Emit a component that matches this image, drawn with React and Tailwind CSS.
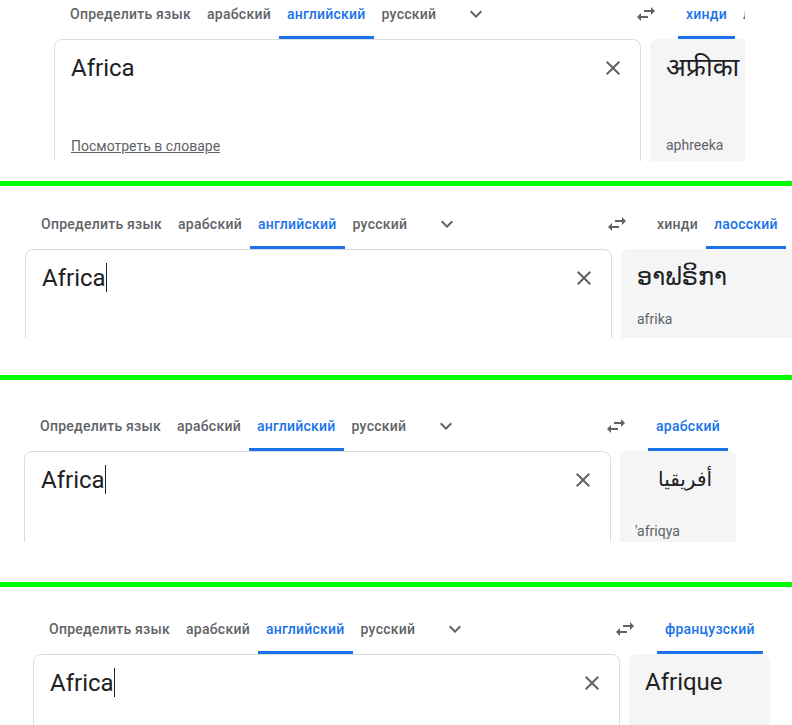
import React from 'react';

const font = { fontFamily: 'Roboto, "Noto Sans", "DejaVu Sans", sans-serif' };

const ChevronIcon = () => (
  <svg viewBox="0 0 24 24" className="w-6 h-6 fill-[#5f6368]">
    <path d="M16.59 8.59L12 13.17 7.41 8.59 6 10l6 6 6-6z" />
  </svg>
);

const SwapIcon = () => (
  <svg viewBox="0 0 24 24" className="w-6 h-6 fill-[#5f6368]">
    <path d="M6.99 11L3 15l3.99 4v-3H14v-2H6.99v-3zM21 9l-3.99-4v3H10v2h7.01v3L21 9z" />
  </svg>
);

const CloseIcon = () => (
  <svg viewBox="0 0 24 24" className="w-6 h-6 fill-[#5f6368]">
    <path d="M19 6.41L17.59 5 12 10.59 6.41 5 5 6.41 10.59 12 5 17.59 6.41 19 12 13.41 17.59 19 19 17.59 13.41 12z" />
  </svg>
);

const Tab = ({ label, active }) => (
  <div
    className={
      active
        ? 'h-12 px-2 flex items-center border-b-[3px] border-[#1a73e8] text-sm font-medium tracking-[0.25px] text-[#1a73e8] whitespace-nowrap'
        : 'h-12 px-2 flex items-center border-b-[3px] border-transparent text-sm font-medium tracking-[0.25px] text-[#5f6368] whitespace-nowrap'
    }
  >
    {label}
  </div>
);

const sourceTabs = [
  { label: 'Определить язык' },
  { label: 'арабский' },
  { label: 'английский', active: true },
  { label: 'русский' },
];

// one cropped strip of the translate page
const Strip = ({ outer, clip, inner, targets, cursor, dict, output, outBox, translit, translitMt }) => (
  <div className={outer}>
    <div className={clip}>
      <div className={inner}>
        {/* tab bars */}
        <div className="flex">
          <div className="w-[560px] shrink-0 flex pl-2">
            {sourceTabs.map((t) => (
              <Tab key={t.label} label={t.label} active={t.active} />
            ))}
            <div className="w-12 h-[45px] ml-2 flex items-center justify-center">
              <ChevronIcon />
            </div>
          </div>
          <div className="w-16 h-[45px] shrink-0 flex items-center justify-center">
            <SwapIcon />
          </div>
          <div className="flex">
            {targets.map((t) => (
              <Tab key={t.label} label={t.label} active={t.active} />
            ))}
          </div>
        </div>

        {/* text boxes */}
        <div className="flex gap-[9px]">
          <div className="w-[587px] h-[300px] shrink-0 border border-[#dadce0] rounded-t-lg flex justify-between">
            <div className="pl-4 pt-3">
              <div className="text-2xl text-[#202124]">
                Africa
                {cursor && <span className="inline-block w-px h-[29px] bg-[#202124] align-[-6px]" />}
              </div>
              {dict && (
                <div className="mt-[52px] text-sm text-[#5f6368] underline">Посмотреть в словаре</div>
              )}
            </div>
            <div className="pt-4 pr-[15px]">
              <CloseIcon />
            </div>
          </div>
          <div className={outBox}>
            {output}
            {translit && <div className={translitMt}>{translit}</div>}
          </div>
        </div>
      </div>
    </div>
  </div>
);

const Divider = () => <div className="h-[5px] bg-[#00ff00]" />;

export default function App() {
  return (
    <div className="w-[792px] h-[725px] bg-white overflow-hidden" style={font}>
      <Strip
        outer="h-[181px]"
        clip="h-[161px] w-[745px] overflow-hidden"
        inner="-mt-[9px] pl-[54px] w-[1100px]"
        targets={[{ label: 'хинди', active: true }, { label: 'лаосский' }]}
        dict
        outBox="w-[300px] h-[300px] shrink-0 bg-[#f5f5f5] rounded-t-lg pl-4 pt-3"
        output={<div className="text-[26px] leading-8 text-[#202124]">अफ्रीका</div>}
        translit="aphreeka"
        translitMt="mt-[52px] text-sm text-[#5f6368]"
      />
      <Divider />
      <Strip
        outer="h-[189px]"
        clip="h-[152px] w-[792px] overflow-hidden"
        inner="pt-[15px] pl-[25px] w-[1100px]"
        targets={[{ label: 'хинди' }, { label: 'лаосский', active: true }]}
        cursor
        outBox="w-[300px] h-[300px] shrink-0 bg-[#f5f5f5] rounded-t-lg pl-4 pt-3"
        output={<div className="text-2xl text-[#202124]">ອາຟຣິກາ</div>}
        translit="afrika"
        translitMt="mt-[16px] text-sm text-[#5f6368]"
      />
      <Divider />
      <Strip
        outer="h-[202px]"
        clip="h-[162px] w-[736px] overflow-hidden"
        inner="pt-[23px] pl-[24px] w-[1100px]"
        targets={[{ label: 'арабский', active: true }]}
        cursor
        outBox="w-[116px] h-[300px] shrink-0 bg-[#f5f5f5] rounded-t-lg pl-[15px] pt-3"
        output={
          <div dir="rtl" className="text-[20px] leading-8 text-[#202124] pr-6">
            أفريقيا
          </div>
        }
        translit="'afriqya"
        translitMt="mt-[26px] text-sm text-[#5f6368]"
      />
      <Divider />
      <Strip
        outer="h-[138px]"
        clip="h-[138px] w-[770px] overflow-hidden"
        inner="pt-[19px] pl-[33px] w-[1100px]"
        targets={[{ label: 'французский', active: true }]}
        cursor
        outBox="w-[141px] h-[300px] shrink-0 bg-[#f5f5f5] rounded-t-lg pl-4 pt-3"
        output={<div className="text-2xl text-[#202124]">Afrique</div>}
      />
    </div>
  );
}
